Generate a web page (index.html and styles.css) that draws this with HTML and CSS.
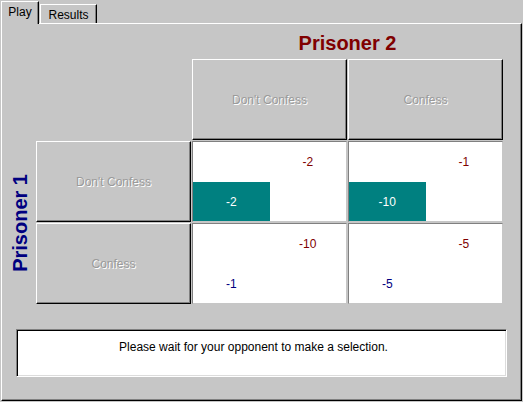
FILE: index.html
```html
<!DOCTYPE html>
<html>
<head>
<meta charset="utf-8">
<title>Prisoner's Dilemma</title>
<link rel="stylesheet" href="styles.css">
</head>
<body>
<div class="window">
  <div class="tabs">
    <div class="tab tab-active">Play</div>
    <div class="tab tab-back">Results</div>
  </div>
  <div class="panel">
    <div class="matrix">
      <div class="title-p2">Prisoner 2</div>
      <div class="label-p1"><span class="label-p1-text">Prisoner 1</span></div>
      <div class="btn col-a">Don't Confess</div>
      <div class="btn col-b">Confess</div>
      <div class="btn row-a">Don't Confess</div>
      <div class="btn row-b">Confess</div>

      <div class="cell cell-aa">
        <div class="pay p2">-2</div>
        <div class="pay p1 chosen">-2</div>
      </div>
      <div class="cell cell-ab">
        <div class="pay p2">-1</div>
        <div class="pay p1 chosen">-10</div>
      </div>
      <div class="cell cell-ba">
        <div class="pay p2">-10</div>
        <div class="pay p1">-1</div>
      </div>
      <div class="cell cell-bb">
        <div class="pay p2">-5</div>
        <div class="pay p1">-5</div>
      </div>
    </div>
    <div class="message">Please wait for your opponent to make a selection.</div>
  </div>
</div>
</body>
</html>
```
FILE: styles.css
```css
html, body {
  margin: 0;
  padding: 0;
  background: #c6c6c6;
}

body {
  width: 523px;
  height: 402px;
  overflow: hidden;
  font-family: "Liberation Sans", Arial, sans-serif;
  font-size: 12px;
  color: #000;
}

.window {
  width: 523px;
  height: 402px;
}

/* ---------- tabs ---------- */
.tabs {
  display: flex;
  align-items: flex-start;
  height: 23px;
}

.tab {
  box-sizing: border-box;
  padding-top: 3px;
  line-height: 14px;
  text-align: center;
  background: #c6c6c6;
  border-top: 1px solid #fff;
  border-left: 1px solid #fff;
  border-right: 1px solid #000;
  box-shadow: inset -1px 0 0 #808080;
}

.tab-active {
  position: relative;
  z-index: 1;
  margin-left: 1px;
  margin-top: 1px;
  width: 38px;
  height: 23px;
}

.tab-back {
  margin-left: 1px;
  margin-top: 4px;
  width: 57px;
  height: 19px;
}

/* ---------- panel ---------- */
.panel {
  box-sizing: border-box;
  margin-left: 1px;
  width: 521px;
  height: 378px;
  border-top: 1px solid #fff;
  border-left: 1px solid #fff;
  border-right: 1px solid #000;
  border-bottom: 1px solid #000;
  box-shadow: inset -1px -1px 0 #808080;
}

.matrix {
  display: grid;
  grid-template-columns: 33px 155px 155px 155px;
  grid-template-rows: 34px 81px 81px 81px;
  gap: 1px;
}

.title-p2 {
  grid-column: 3 / 5;
  grid-row: 1;
  padding-top: 8px;
  line-height: 23px;
  font-size: 20px;
  font-weight: bold;
  color: #800000;
  text-align: center;
}

.label-p1 {
  grid-column: 1;
  grid-row: 3 / 5;
  display: flex;
  align-items: center;
  justify-content: center;
  padding-left: 3px;
}

.label-p1-text {
  writing-mode: vertical-rl;
  transform: rotate(180deg);
  font-size: 20px;
  font-weight: bold;
  line-height: 23px;
  color: #000080;
}

/* ---------- disabled buttons ---------- */
.btn {
  box-sizing: border-box;
  display: flex;
  align-items: center;
  justify-content: center;
  padding-top: 1px;
  border-top: 1px solid #fff;
  border-left: 1px solid #fff;
  border-right: 1px solid #000;
  border-bottom: 1px solid #000;
  box-shadow: inset -1px -1px 0 #808080;
  color: #9a9a9a;
  text-shadow: 1px 1px 0 #fff;
  line-height: 14px;
}

.col-a { grid-column: 3; grid-row: 2; }
.col-b { grid-column: 4; grid-row: 2; }
.row-a { grid-column: 2; grid-row: 3; }
.row-b { grid-column: 2; grid-row: 4; }

/* ---------- payoff cells ---------- */
.cell {
  box-sizing: border-box;
  display: grid;
  grid-template-columns: 1fr 1fr;
  grid-template-rows: 1fr 1fr;
  background: #fff;
  border-top: 1px solid #808080;
  border-left: 1px solid #808080;
  border-right: 1px solid #c6c6c6;
  border-bottom: 1px solid #c6c6c6;
}

.cell-aa { grid-column: 3; grid-row: 3; }
.cell-ab { grid-column: 4; grid-row: 3; }
.cell-ba { grid-column: 3; grid-row: 4; }
.cell-bb { grid-column: 4; grid-row: 4; }

.pay {
  display: flex;
  align-items: center;
  justify-content: center;
  line-height: 14px;
}

.p2 {
  grid-column: 2;
  grid-row: 1;
  color: #800000;
}

.p1 {
  grid-column: 1;
  grid-row: 2;
  color: #000080;
  padding-top: 1px;
}

.p1.chosen {
  background: #008080;
  color: #fff;
}

/* ---------- status message ---------- */
.message {
  box-sizing: border-box;
  margin-top: 25px;
  margin-left: 14px;
  width: 491px;
  height: 48px;
  padding-top: 10px;
  padding-right: 16px;
  line-height: 14px;
  text-align: center;
  background: #fff;
  border-top: 1px solid #808080;
  border-left: 1px solid #808080;
  border-right: 1px solid #fff;
  border-bottom: 1px solid #fff;
  box-shadow: inset 1px 1px 0 #000, inset -1px -1px 0 #dcdcdc;
}
```
